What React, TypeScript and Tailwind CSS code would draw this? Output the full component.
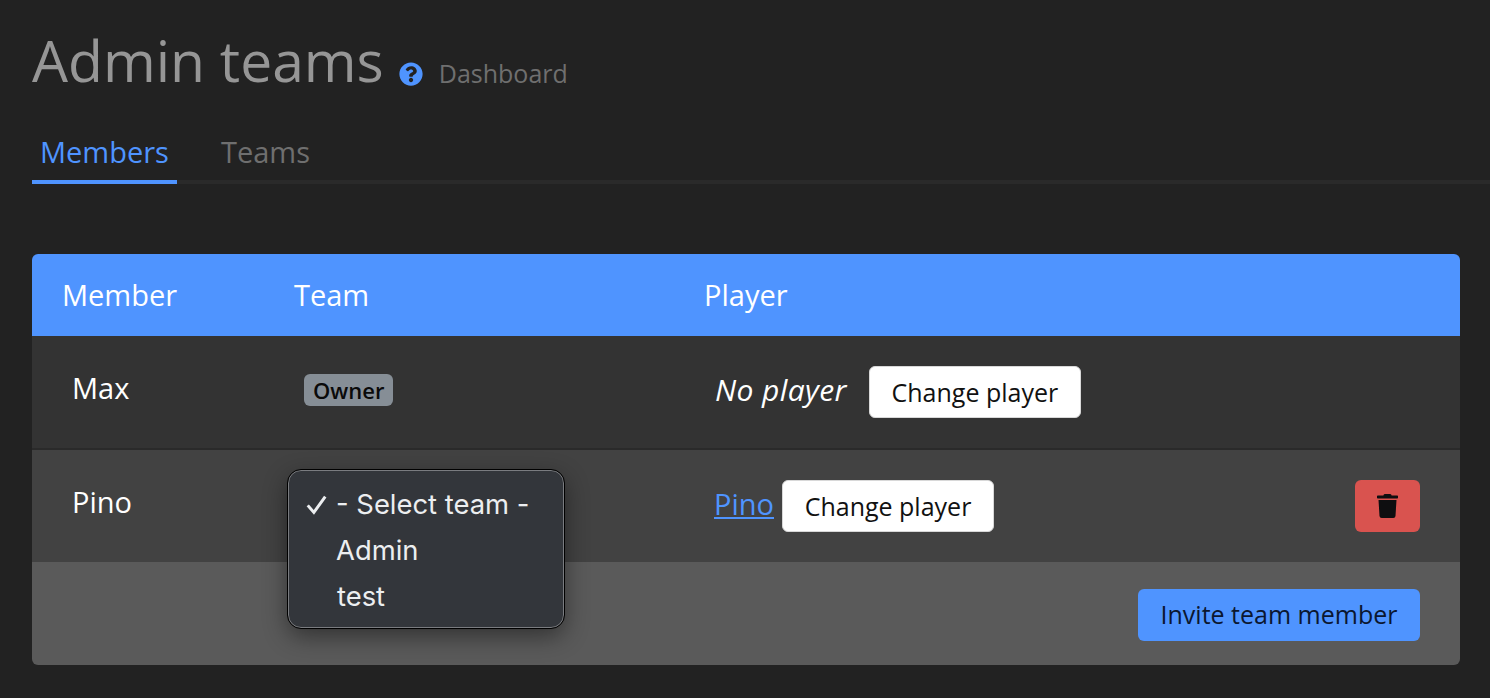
import React from "react";

function HelpIcon() {
  return (
    <svg width="24" height="24" viewBox="0 0 512 512" className="w-[24px] h-[24px]">
      <path fill="#4f94ff" d="M504 256c0 136.997-111.043 248-248 248S8 392.997 8 256C8 119.083 119.043 8 256 8s248 111.083 248 248zM262.655 90c-54.497 0-89.255 22.957-116.549 63.758-3.536 5.286-2.353 12.415 2.715 16.258l34.699 26.31c5.205 3.947 12.621 3.008 16.665-2.122 17.864-22.658 30.113-35.797 57.303-35.797 20.429 0 45.698 13.148 45.698 32.958 0 14.976-12.363 22.667-32.534 33.976C247.128 238.528 216 254.941 216 296v4c0 6.627 5.373 12 12 12h56c6.627 0 12-5.373 12-12v-1.333c0-28.462 83.186-29.647 83.186-106.667 0-58.002-60.165-102-116.531-102zM256 338c-25.365 0-46 20.635-46 46 0 25.364 20.635 46 46 46s46-20.636 46-46c0-25.365-20.635-46-46-46z" />
    </svg>
  );
}

function Trash() {
  return (
    <svg viewBox="0 0 448 512" className="w-[21px] h-[24px]">
      <path fill="#0e0e10" d="M432 32H312l-9.4-18.7A24 24 0 0 0 281.1 0H166.8a23.72 23.72 0 0 0-21.4 13.3L136 32H16A16 16 0 0 0 0 48v32a16 16 0 0 0 16 16h416a16 16 0 0 0 16-16V48a16 16 0 0 0-16-16zM53.2 467a48 48 0 0 0 47.9 45h245.8a48 48 0 0 0 47.9-45L416 128H32z" />
    </svg>
  );
}

function WhiteButton() {
  return (
    <button className="h-[52px] w-[212px] pt-[1px] bg-white border border-[#d8d8d8] rounded-[6px] text-[#111] text-[25px] whitespace-nowrap">
      Change player
    </button>
  );
}

export default function App() {
  return (
    <div className="h-[698px] overflow-hidden bg-[#222222] pl-[32px] pt-[26px] font-['Open_Sans','Noto_Sans',sans-serif]">
      <div className="flex items-center h-[72px]">
        <h1 className="text-[57px] leading-[72px] -mt-[4px] text-[#969696]">Admin teams</h1>
        <div className="ml-[15px] mt-[24px]"><HelpIcon /></div>
        <span className="ml-[16px] mt-[24px] text-[25px] text-[#6f6f6f]">Dashboard</span>
      </div>

      <div className="mt-[22px] flex border-b-4 border-[#2a2a2a] h-[64px]">
        <div className="h-[64px] -mb-[4px] px-[8px] border-b-4 border-[#4f94ff] text-[#4f94ff] text-[29px] leading-[64px]">Members</div>
        <div className="ml-[36px] px-[8px] text-[#6f6f6f] text-[29px] leading-[64px]">Teams</div>
      </div>

      <div className="relative mt-[70px] w-[1428px] rounded-[6px] overflow-hidden">
        <div className="grid grid-cols-[232px_410px_1fr] items-center h-[82px] bg-[#4f94ff] text-white text-[29px]">
          <div className="pl-[30px]">Member</div>
          <div className="pl-[30px]">Team</div>
          <div className="pl-[30px]">Player</div>
        </div>

        <div className="grid grid-cols-[232px_410px_1fr] items-center h-[114px] bg-[#333333] border-b-2 border-[#2a2a2a]">
          <div className="pl-[40px] text-white text-[29px] -mt-[8px]">Max</div>
          <div className="pl-[40px] -mt-[4px]">
            <span className="inline-flex items-center h-[32px] px-[9px] rounded-[6px] bg-[#868e96] text-[#0a0a0a] text-[22px] font-semibold -translate-x-[0px]">Owner</span>
          </div>
          <div className="pl-[41px] flex items-center gap-[22px]">
            <span className="italic text-white text-[30px] tracking-[0.4px] -mt-[6px]">No player</span>
            <WhiteButton />
          </div>
        </div>

        <div className="grid grid-cols-[232px_410px_1fr_auto] items-center h-[112px] bg-[#424242] pr-[40px]">
          <div className="pl-[40px] text-white text-[29px] -mt-[8px]">Pino</div>
          <div />
          <div className="pl-[40px] flex items-center gap-[8px]">
            <a className="underline text-[#4f94ff] text-[29px] -mt-[4px]">Pino</a>
            <WhiteButton />
          </div>
          <button className="w-[65px] h-[52px] rounded-[6px] bg-[#d9534f] flex items-center justify-center"><Trash /></button>
        </div>

        <div className="flex justify-end items-start h-[103px] pt-[27px] pr-[40px] bg-[#5a5a5a]">
          <button className="h-[52px] w-[282px] rounded-[6px] bg-[#4f94ff] text-[#0b1730] text-[25px]">Invite team member</button>
        </div>

        <div className="absolute left-[256px] top-[216px] w-[276px] h-[158px] rounded-[13px] bg-[#33363b] border border-[#7a7c80] outline outline-1 outline-black shadow-[0_8px_24px_rgba(0,0,0,0.45)] pt-[10px] text-[#eceef0] text-[27.4px] leading-[46px] font-['Inter',sans-serif]">
          <div className="relative pl-[47px]">
            <svg viewBox="0 0 24 24" className="absolute left-[17px] top-[13px] w-[21px] h-[21px]" fill="none" stroke="#eceef0" strokeWidth="3.4"><path d="M2 13l7 8L22 3" /></svg>
            - Select team -
          </div>
          <div className="pl-[47px]">Admin</div>
          <div className="pl-[48px]">test</div>
        </div>
      </div>
    </div>
  );
}
